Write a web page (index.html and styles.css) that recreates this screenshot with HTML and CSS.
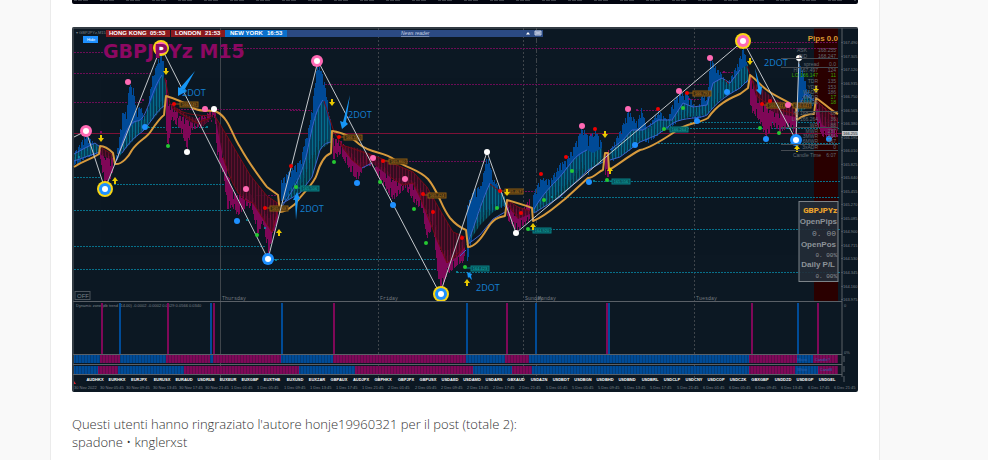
FILE: index.html
```html
<!DOCTYPE html>
<html lang="it">
<head>
    <meta charset="UTF-8">
    <meta name="viewport" content="width=device-width, initial-scale=1.0">
    <title>GBPJPY M15</title>
    <link rel="stylesheet" href="styles.css">
</head>
<body>
    <main class="post">
        <svg class="shot shot-previous" viewBox="72 0 786 4" aria-hidden="true">
            <path d="M74 0.500H856" stroke="#3c4048" stroke-dasharray="3 1 4 1 5 12"/>
        </svg>

        <svg class="shot" viewBox="72 27 786 365" role="img" aria-label="GBPJPYz M15">
            <defs>
                <pattern id="hatchBlue" width="3" height="4" patternUnits="userSpaceOnUse">
                    <rect width="3" height="4" fill="#083e50"/>
                    <rect width="1" height="4" fill="#08788a"/>
                </pattern>
                <pattern id="hatchRed" width="3" height="4" patternUnits="userSpaceOnUse">
                    <rect width="3" height="4" fill="#3c0b20"/>
                    <rect width="1" height="4" fill="#6d1030"/>
                </pattern>
                <pattern id="grid" width="3" height="10" patternUnits="userSpaceOnUse">
                    <rect width="1" height="10" fill="#0c1823" opacity="0.25"/>
                </pattern>
                <g id="up"><path d="M0 -4L3 0H1V3H-1V0H-3Z"/></g>
                <g id="down"><path d="M0 4L3 0H1V-3H-1V0H-3Z"/></g>
            </defs>

            <rect x="814" y="28" width="24" height="273" fill="#2a0000"/>

            <!-- day separators -->
            <path class="day" d="M220.5 28V378"/>
            <path class="day dotted" d="M378.5 28V378M523.5 28V378M694.5 28V378"/>
            <path class="day dashed" d="M536.5 28V378"/>

            <!-- support and resistance levels -->
            <path class="level-sell" d="M74 52.5H104M74 73.5H152M74 102.5H143M175 109.5H300M220 48.5H838M325 84.5H708M290 110.5H312M400 161.5H487M256 195.5H276M510 191.5H537M745 42.5H838M637 110.5H658M688 99.5H706M722 72.5H740"/>
            <path class="level-buy" d="M74 177.5H100M114 184.5H226M74 210.5H231M74 246.5H266M274 259.5H436M74 269.5H436M148 127.5H206M595 181.5H840M552 197.5H840M550 229.5H840M457 272.5H840M690 122.5H840M684 128.5H840M655 143.5H840"/>
            <path class="bid" d="M74 133.5H842"/>

            <g id="candles"></g>

            <!-- moving average ribbons -->
            <g fill="url(#hatchBlue)" opacity="0.8">
                <path d="M74 154L85 148L95 143L100 147V152L88 156L74 161Z"/>
                <path d="M117 160L130 128L137 120L143 120L153 97L162 75L166 82L165 105L155 117L140 133L122 153Z"/>
                <path d="M281 208L290 190L298 178L307 153L315 117L323 100L331 130V142L320 150L312 177L300 193L283 203Z"/>
                <path d="M467 245L473 227L482 200L490 183L498 189L505 197V205L493 212L480 225Z"/>
                <path d="M534 209L547 190L560 177L573 160L587 150L593 153L602 148L603 162L588 170L560 197L534 213Z"/>
                <path d="M610 152L623 140L632 130L643 130L650 127L658 120L672 120L683 103L693 107L707 105L713 83L722 78L730 83L740 70L748 64V80L740 88L720 100L707 115L690 117L673 123L657 135L640 142L620 157L610 160Z"/>
                <path d="M798 107L805 95L812 100L814 104L800 112Z"/>
            </g>
            <g fill="url(#hatchRed)" opacity="0.85">
                <path d="M101 148L112 154V160L101 155Z"/>
                <path d="M170 103L180 110L187 115L200 120L213 117L203 126L190 122L172 108Z"/>
                <path d="M215 116L233 146L250 175L267 196L279 204L272 232L262 217L253 203L237 193L223 157Z"/>
                <path d="M340 145L357 148L380 158L413 172L427 187L440 210L453 232L465 237V247L457 257L447 263L437 240L427 213L420 197L413 183L403 185L390 177L372 163L362 168L352 160Z"/>
                <path d="M507 200L518 207L530 211V214L518 219L507 205Z"/>
                <path d="M751 78L757 85L773 98L796 108V117L775 113L757 100Z"/>
                <path d="M816 100L838 118V131L822 125Z"/>
            </g>
            <g class="ribbon-blue">
                <path d="M74 154L85 148L95 143L100 147M74 161L88 156L100 152"/>
                <path d="M117 160C122 145 126 122 137 121C147 121 150 92 162 75M122 153C132 138 137 136 143 131C153 120 155 112 165 105"/>
                <path d="M281 208C293 190 300 180 307 153C313 122 316 110 323 100M283 203L300 193L312 177L320 150C324 143 327 143 331 142M362 168L372 163"/>
                <path d="M467 245C476 222 480 205 490 183M467 245L480 235L493 219L505 212M460 256L466 250"/>
                <path d="M534 209C545 190 556 182 563 173C575 158 576 155 587 150M534 213L560 197L588 170L603 162"/>
                <path d="M610 160L620 157L640 142L657 135L673 123C684 117 700 119 707 115C716 103 724 97 740 88L748 80M610 150L623 140L632 130L643 130L658 120L672 120L683 103L693 107L707 105L713 83L722 78L730 83L740 70"/>
                <path d="M798 108L805 94L814 101"/>
            </g>
            <g class="ribbon-red">
                <path d="M100 147L113 155M165 78L170 104C182 114 190 115 213 116M172 108L197 123L210 118"/>
                <path d="M215 116L233 146L250 175L267 196L279 204M223 157C235 193 241 200 253 203L262 217L272 232L278 210"/>
                <path d="M324 101L334 132L342 145L380 158L413 172L427 187L440 210L453 232L465 237M340 143L352 160L362 168M390 177L403 185L413 183L420 197L437 240L447 263L465 247"/>
                <path d="M490 184L499 191M507 200L518 207L530 211M507 203L518 218M747 66L758 97L773 108L796 114M816 100L838 122M725 80L729 84"/>
            </g>

            <path class="average" d="M74 167C84 160 90 160 99 154L100 146C106 146 111 151 113 153L115 164C122 165 129 156 132 150C139 140 147 138 151 131C157 122 160 118 164 115L166 96C173 98 182 101 193 108C203 113 212 109 217 112C229 118 232 135 240 147C250 165 258 175 267 187L278 195L280 212C286 212 290 208 295 204C307 188 314 184 317 174C321 160 326 155 331 153L332 131C345 133 351 137 359 144C371 154 383 151 395 160C408 169 418 169 428 179C439 192 441 207 450 218C456 225 461 228 466 230L468 247C474 247 481 239 487 229C493 219 498 217 505 216L507 200C514 202 524 205 532 208L533 221C546 216 556 206 565 199L588 178C594 178 599 171 603 170L605 153L608 153L609 170C619 164 630 155 640 150C650 148 661 141 673 133C684 123 698 124 708 118C718 103 731 98 740 94L748 88L750 75C756 79 762 87 767 90C776 97 784 99 796 107L797 120C803 115 808 114 814 114L816 98C824 103 830 110 838 114"/>

            <g id="tags"></g>

            <path class="zigzag" d="M74 137L86 131L105 189L161 47L268 259L318 61L440 294L487 152L516 233L743 41L796 140L799 58"/>

            <g id="dots"></g>

            <g fill="#e8c800">
                <use href="#down" x="101" y="138"/>
                <use href="#down" x="166" y="71"/>
                <use href="#down" x="332" y="102"/>
                <use href="#down" x="507" y="192"/>
                <use href="#down" x="605" y="134"/>
                <use href="#down" x="750" y="61"/>
                <use href="#down" x="816" y="89"/>
                <use href="#up" x="115" y="181"/>
                <use href="#up" x="279" y="233"/>
                <use href="#up" x="467" y="283"/>
                <use href="#up" x="533" y="227"/>
                <use href="#up" x="610" y="171"/>
                <use href="#up" x="797" y="149"/>
            </g>

            <text class="symbol" x="103" y="58">GBPJPYz M15</text>

            <g fill="#1696f5">
                <path d="M195 71L185 89L187 91L178 96V87L180 88Z"/>
                <path d="M350 95L346 122L348 124L342 129L340 121L343 122Z"/>
                <path d="M755 68L760 86L762 87L761 95L756 90L758 89Z"/>
                <path d="M297 192L300 199L298 200L296 220L295 200L293 200Z"/>
                <path d="M467 272L472 274L471 276L472 280L469 277L468 278Z"/>
            </g>
            <g class="note">
                <text x="182" y="96">2DOT</text>
                <text x="348" y="118">2DOT</text>
                <text x="300" y="212">2DOT</text>
                <text x="476" y="291">2DOT</text>
                <text x="764" y="66">2DOT</text>
            </g>

            <!-- top toolbar -->
            <text class="tiny" x="76" y="34">▾ GBPJPYz,M15</text>
            <rect x="83" y="36" width="15" height="7" fill="#1e90ff"/>
            <text class="button-text" x="91" y="41">Hide</text>
            <rect x="106" y="30" width="64" height="7" fill="#8b1a1f"/>
            <rect x="171" y="30" width="54" height="7" fill="#8b1a1f"/>
            <rect x="225" y="30" width="62" height="7" fill="#0a70cc"/>
            <rect x="287" y="30" width="256" height="7" fill="#2b4a83"/>
            <g class="session">
                <text x="109" y="35">HONG KONG</text>
                <text x="150" y="35">05:53</text>
                <text x="175" y="35">LONDON</text>
                <text x="205" y="35">21:53</text>
                <text x="230" y="35">NEW YORK</text>
                <text x="267" y="35">16:53</text>
            </g>
            <text class="news" x="401" y="35">News reader</text>
            <path d="M526 34.500L528 32L530 34.500Z" fill="#fff"/>
            <path d="M535 31H541V35H535ZM536 32L540 34M540 32L536 34" fill="#7088b5" stroke="#c5cee2"/>

            <!-- daily range table -->
            <g id="stats" class="stats"></g>
            <path d="M781 58.500H838M781 67.500H838M800 111.500H838M781 127.500H838M781 144.500H838M781 150.500H838" stroke="#454b52"/>
            <text class="pips" x="838" y="41">Pips 0.0</text>

            <!-- open position box -->
            <rect x="799" y="201.500" width="39" height="80" fill="#222c37" fill-opacity="0.9" stroke="#7c8389"/>
            <g class="account">
                <text class="account-name" x="837" y="213">GBPJPYz</text>
                <text class="account-label" x="837" y="224">OpenPips</text>
                <text class="account-main" x="836" y="236">0. 00</text>
                <text class="account-label" x="836" y="247">OpenPos</text>
                <text class="account-value" x="837" y="257">0. 00%</text>
                <text class="account-label" x="835" y="267">Daily P/L</text>
                <text class="account-value" x="837" y="278">0. 00%</text>
            </g>

            <g class="days">
                <text x="222" y="300">Thursday</text>
                <text x="380" y="300">Friday</text>
                <text x="525" y="300">Sunday</text>
                <text x="538" y="300">Monday</text>
                <text x="696" y="300">Tuesday</text>
            </g>
            <rect x="75" y="291.500" width="15" height="8" fill="#0c1823" stroke="#4b535b"/>
            <text class="off" x="77" y="298">OFF</text>

            <!-- trend panes -->
            <text class="tiny" x="76" y="307">Dynamic zone jdb trend (14.00) -0.0002 -0.0002 0.0029 0.0566 0.0340</text>
            <g id="signals"></g>
            <g id="trends"></g>
            <rect x="74" y="355" width="764" height="19" fill="url(#grid)"/>
            <g class="tiny ribbon-text">
                <text x="797" y="361">Micro</text>
                <text x="815" y="361">Candle?</text>
                <text x="797" y="371">White</text>
                <text x="820" y="371">CandB</text>
            </g>
            <path class="frame" d="M73 28V391M72 28H858M842 28V377M73 301.500H842M73 354.500H842M73 364.500H842M73 374.500H842"/>

            <g id="pairs" class="pairs"></g>
            <g id="times" class="tiny"></g>
            <g id="prices" class="tiny"></g>
            <rect x="842" y="131" width="16" height="5" fill="#c0c5c9"/>
            <text class="price-now" x="843" y="135">166.255</text>
            <g class="tiny">
                <text x="844" y="307">0</text>
                <text x="844" y="354">0%</text>
            </g>
            <path d="M844 356V362M844 366V372M844 376V382" stroke="#59616a"/>
            <path d="M74 381L76 384H74Z" fill="#e0202e"/>
        </svg>

        <p class="thanks">Questi utenti hanno ringraziato l'autore honje19960321 per il post (totale 2):<br>spadone • knglerxst</p>
    </main>

    <script src="chart.js"></script>
</body>
</html>
```

FILE: styles.css
```css
:root {
    --page-bg: #f9f9f9;
    --post-bg: #ffffff;
    --border-color: #ebebeb;
    --text-color: #333333;
    --chart-bg: #0c1823;
    --blue: #004b97;
    --magenta: #7f0858;
    --muted: #7b8289;
}

* {
    box-sizing: border-box;
}

body {
    margin: 0;
    background-color: var(--page-bg);
    color: var(--text-color);
    font-family: "Open Sans", sans-serif;
    font-size: 13px;
    font-weight: 300;
    line-height: 18px;
}

.post {
    min-height: 100vh;
    margin: 0 108px 0 50px;
    padding: 0 21px;
    background-color: var(--post-bg);
    border-left: 1px solid var(--border-color);
    border-right: 1px solid var(--border-color);
}

.shot {
    display: block;
    width: 100%;
    height: auto;
    margin-bottom: 23px;
    border-radius: 2px;
    background-color: var(--chart-bg);
    font-family: "Liberation Sans", sans-serif;
    font-weight: 400;
}

.shot-previous {
    background-color: #02040f;
    border-radius: 0 0 2px 2px;
}

.thanks {
    margin: 0;
    padding-bottom: 8px;
}

/* chart lines */
.shot path {
    stroke-linejoin: round;
}

.day {
    stroke: #3f454b;
    fill: none;
}

.dotted {
    stroke-dasharray: 2 2;
}

.dashed {
    stroke-dasharray: 5 2 1 2;
}

.level-sell {
    stroke: #6c0d56;
    stroke-dasharray: 2 1;
}

.level-buy {
    stroke: #08708a;
    stroke-dasharray: 2 1;
}

.bid {
    fill: none;
    stroke: #7d1238;
}

.ribbon-blue {
    fill: none;
    stroke: #3b62cc;
}

.ribbon-red {
    fill: none;
    stroke: #780a14;
}

.average {
    fill: none;
    stroke: #d79a3d;
    stroke-width: 2px;
}

.zigzag {
    fill: none;
    stroke: #c4c8cc;
}

.frame {
    fill: none;
    stroke: #5a6067;
}

.blue {
    fill: var(--blue);
}

.magenta {
    fill: var(--magenta);
}

/* chart text */
.symbol {
    font: bold 19px "DejaVu Sans", sans-serif;
    fill: #8c0862;
}

.note {
    font: 9px "Open Sans", sans-serif;
    fill: #1580d2;
}

.tiny {
    font-size: 4px;
    fill: var(--muted);
}

.session {
    font-size: 6px;
    font-weight: bold;
    fill: #ffffff;
}

.news {
    font-size: 5px;
    font-style: italic;
    text-decoration: underline;
    fill: #c5cee2;
}

.button-text {
    font-size: 4px;
    text-anchor: middle;
    fill: #ffffff;
}

.pips {
    font-size: 8px;
    font-weight: bold;
    text-anchor: end;
    fill: #dc9a32;
}

.stats {
    font-size: 5px;
    text-anchor: end;
    fill: #626a72;
}

.stats .good {
    fill: #39a800;
}

.account {
    text-anchor: end;
    fill: #8c9298;
}

.account-name {
    font: 900 8px Roboto, sans-serif;
    fill: #e9a22c;
}

.account-label {
    font-size: 8px;
    font-weight: bold;
}

.account-main {
    font: 8px "Liberation Mono", monospace;
}

.account-value {
    font: 6px "Liberation Mono", monospace;
}

.days {
    font: 5px "Liberation Mono", monospace;
    fill: #747a80;
}

.off {
    font-size: 6px;
    fill: #7a8188;
}

.pairs {
    font-size: 4px;
    font-weight: bold;
    text-anchor: middle;
    fill: #ffffff;
}

.ribbon-text {
    fill: #2d62b0;
}

.tag {
    font-size: 4px;
    text-anchor: middle;
}

.tag-sell rect {
    fill: #3a2a12;
    stroke: #8d5c10;
}

.tag-sell text {
    fill: #c08420;
}

.tag-buy rect {
    fill: #075058;
    stroke: #078084;
}

.tag-buy text {
    fill: #10b5ae;
}

.price-now {
    font-size: 4px;
    fill: #20262c;
}
```

FILE: chart.js
```js
const SVG_NS = 'http://www.w3.org/2000/svg';

function add(parent, tag, attrs, text) {
    const el = document.createElementNS(SVG_NS, tag);
    for (const key in attrs) {
        el.setAttribute(key, attrs[key]);
    }
    if (text !== undefined) {
        el.textContent = text;
    }
    parent.appendChild(el);
    return el;
}

function byId(id) {
    return document.getElementById(id);
}

// Price runs: [x, high, low]
const runs = [
    ['blue', [[74, 153, 165], [80, 143, 162], [86, 134, 158], [92, 141, 156], [99, 146, 152]]],
    ['magenta', [[100, 150, 160], [104, 154, 186], [108, 156, 183], [113, 158, 172]]],
    ['blue', [[114, 158, 165], [118, 145, 158], [122, 113, 152], [126, 112, 146], [129, 84, 142], [133, 88, 138], [136, 111, 137], [140, 105, 132], [145, 119, 128], [148, 102, 124], [152, 76, 120], [157, 62, 110], [161, 50, 106], [164, 66, 104]]],
    ['magenta', [[166, 80, 140], [168, 104, 146], [172, 104, 120], [180, 116, 130], [187, 118, 150], [191, 120, 130], [200, 117, 128], [208, 112, 122], [214, 110, 118], [217, 120, 155], [223, 155, 175], [227, 170, 209], [232, 190, 207], [237, 195, 216], [247, 193, 206], [252, 195, 210], [257, 208, 234], [263, 210, 225], [268, 215, 254], [273, 214, 235], [279, 205, 215]]],
    ['blue', [[281, 180, 204], [290, 170, 198], [300, 160, 185], [304, 143, 178], [310, 120, 160], [315, 80, 155], [317, 62, 150], [323, 76, 145], [327, 100, 143], [331, 125, 140]]],
    ['magenta', [[333, 138, 160], [340, 140, 154], [350, 152, 172], [357, 160, 180], [365, 154, 166], [373, 158, 167], [380, 162, 182], [393, 178, 200], [405, 178, 188], [415, 182, 205], [422, 190, 208], [426, 210, 240], [433, 208, 225], [437, 230, 275], [441, 250, 289], [447, 250, 275], [457, 245, 265], [465, 238, 262]]],
    ['blue', [[467, 205, 262], [473, 190, 230], [480, 186, 220], [487, 155, 212], [493, 178, 210], [500, 190, 208], [505, 197, 206]]],
    ['magenta', [[507, 203, 220], [517, 210, 231], [523, 208, 225], [530, 198, 222]]],
    ['blue', [[533, 193, 213], [541, 177, 205], [550, 180, 198], [560, 163, 192], [566, 160, 185], [575, 143, 175], [582, 127, 168], [588, 137, 175], [595, 130, 163], [602, 144, 160]]],
    ['magenta', [[605, 155, 175], [609, 148, 180]]],
    ['blue', [[611, 148, 162], [620, 130, 156], [628, 111, 152], [637, 122, 142], [641, 108, 140], [647, 128, 143], [658, 110, 135], [667, 120, 128], [673, 101, 125], [679, 93, 120], [687, 94, 116], [697, 110, 120], [702, 94, 117], [707, 97, 114], [710, 58, 110], [715, 66, 103], [722, 75, 98], [727, 84, 94], [737, 64, 90], [743, 47, 84], [748, 68, 82]]],
    ['magenta', [[750, 74, 110], [757, 98, 118], [766, 106, 138], [773, 108, 125], [780, 110, 133], [788, 106, 126], [796, 112, 135]]],
    ['blue', [[798, 62, 112], [802, 70, 100], [807, 88, 106], [814, 100, 105]]],
    ['magenta', [[816, 102, 123], [822, 115, 137], [830, 121, 138], [838, 130, 137]]]
];

const candles = byId('candles');
runs.forEach(([color, points]) => {
    for (let i = 0; i < points.length - 1; i++) {
        const [x1, high1, low1] = points[i];
        const [x2, high2, low2] = points[i + 1];
        for (let x = x1; x < x2; x++) {
            const t = (x - x1) / (x2 - x1);
            const wave = Math.sin(x * 2.3) * 6 + Math.sin(x * 5.1) * 3;
            const high = high1 + (high2 - high1) * t + Math.max(0, wave);
            const low = low1 + (low2 - low1) * t + Math.min(0, wave);
            add(candles, 'rect', { class: color, x: x, y: Math.round(high), width: 1, height: Math.max(2, Math.round(low - high)) });
        }
    }
});

// Turning points: colour, radius, then x/y pairs
const dots = [
    ['#ff69b4', 3, [[128, 82], [205, 109], [246, 189], [373, 158], [405, 179], [582, 126], [628, 109], [679, 91], [710, 58], [788, 105]]],
    ['#1e90ff', 3, [[145, 127], [237, 221], [357, 183], [393, 205], [589, 182], [635, 145], [697, 121], [727, 92], [766, 139], [829, 139]]],
    ['#fff', 3, [[214, 109], [187, 152], [487, 152], [516, 233], [799, 58]]],
    ['#f00000', 2, [[174, 104], [265, 208], [291, 166], [339, 137], [383, 161], [423, 194], [433, 212], [462, 238], [500, 191], [521, 213], [541, 174], [566, 157], [595, 129], [658, 109], [687, 93], [762, 104], [770, 101]]],
    ['#25c832', 2, [[168, 146], [257, 235], [296, 187], [334, 162], [380, 182], [414, 209], [426, 243], [465, 267], [497, 208], [528, 229], [544, 200], [572, 171], [607, 180], [664, 129], [683, 108], [760, 128], [779, 133]]],
    ['#a0087a', 1, [[101, 132], [143, 100], [591, 135], [637, 110], [689, 99], [724, 72]]],
    ['#0899ad', 1, [[79, 157], [148, 127], [207, 127], [247, 220], [265, 228], [276, 260], [457, 272], [552, 197], [594, 181], [788, 128]]]
];
dots.forEach(([fill, r, places]) => {
    places.forEach(([cx, cy]) => add(byId('dots'), 'circle', { cx, cy, r, fill }));
});

// Major swings: x, y, ring colour, has a yellow border
const swings = [
    [86, 131, '#ff69b4', false], [161, 48, '#ff69b4', true], [317, 61, '#ff69b4', false], [743, 41, '#ff69b4', true],
    [105, 189, '#1e90ff', true], [268, 259, '#1e90ff', false], [441, 294, '#1e90ff', true], [796, 140, '#1e90ff', false]
];
swings.forEach(([cx, cy, fill, bordered]) => {
    if (bordered) {
        add(byId('dots'), 'circle', { cx, cy, r: 8, fill: '#f8d514' });
    }
    add(byId('dots'), 'circle', { cx, cy, r: 6, fill });
    add(byId('dots'), 'circle', { cx, cy, r: 3, fill: '#fff' });
});

const tags = [
    ['sell', 180, 102, '166.449'], ['sell', 270, 206, '165.068'], ['sell', 344, 135, '166.180'],
    ['sell', 389, 159, '165.860'], ['sell', 428, 193, '165.424'], ['sell', 505, 189, '165.467'],
    ['sell', 693, 91, '166.793'], ['sell', 767, 103, '166.641'], ['sell', 793, 103, '166.641'],
    ['buy', 301, 186, '165.506'], ['buy', 471, 266, '164.423'], ['buy', 533, 228, '164.920'],
    ['buy', 670, 127, '166.264'], ['buy', 612, 179, '165.556']
];
tags.forEach(([kind, x, y, price]) => {
    const tag = add(byId('tags'), 'g', { class: 'tag tag-' + kind });
    add(tag, 'path', { d: `M${x - 5} ${y + 2}H${x}`, stroke: kind === 'sell' ? '#8d5c10' : '#078084' });
    add(tag, 'rect', { x, y, width: 18, height: 5 });
    add(tag, 'text', { x: x + 9, y: y + 4 }, price);
});

// Trend signals
const signals = [
    [101, 'magenta'], [119, 'blue'], [167, 'magenta'], [210, 'blue'], [213, 'magenta'], [281, 'blue'], [333, 'magenta'],
    [466, 'blue'], [506, 'magenta'], [535, 'blue'], [606, 'magenta'], [608, 'blue'], [751, 'magenta'], [797, 'blue'], [817, 'magenta']
];
signals.forEach(([x, color]) => add(byId('signals'), 'rect', { class: color, x, y: 303, width: 2, height: 51 }));

// Start of every block, colours alternate from blue
const trends = [
    [355, [74, 100, 120, 166, 210, 213, 281, 333, 466, 505, 529, 749, 797, 813, 838]],
    [366, [74, 98, 118, 184, 299, 355, 473, 512, 532, 749, 795, 818, 838]]
];
trends.forEach(([y, edges]) => {
    for (let i = 0; i < edges.length - 1; i++) {
        add(byId('trends'), 'rect', { class: i % 2 ? 'magenta' : 'blue', x: edges[i], y, width: edges[i + 1] - edges[i], height: 8 });
    }
});

const pairs = 'AUDHKX EURHKX EURJPX EURUSX EURAUD USDRUB EUXEUR EUXGBP EUXTHB EUXUSD EUXZAR GBPAUX AUDJPX GBPHKX GBPJPX GBPUSX USDAED USDAMD USDARS GBXAUD USDAZN USDBDT USDBGN USDBHD USDBND USDBRL USDCLP USDCNY USDCOP USDCZK GBXGBP USDDZD USDEGP USDGEL'.split(' ');
pairs.forEach((pair, i) => add(byId('pairs'), 'text', { x: Math.round(95 + i * 22.18), y: 381 }, pair));

const hours = ['01:45', '05:45', '09:45', '13:45', '17:45', '21:45'];
['30 Nov', '1 Dec', '2 Dec', '5 Dec', '6 Dec'].forEach((day, d) => {
    hours.forEach((hour, h) => {
        const label = d + h === 0 ? '30 Nov 2022' : day + ' ' + hour;
        add(byId('times'), 'text', { x: Math.round(74 + (d * 6 + h) * 26.2), y: 389 }, label);
    });
});

for (let i = 0; i < 20; i++) {
    const y = Math.round(44 + i * 13.53);
    add(byId('prices'), 'text', { x: 843, y }, (167.49 - i * 0.185).toFixed(3));
    add(byId('prices'), 'path', { d: `M841 ${y - 1.5}h2`, stroke: '#50565d' });
}

// Range table: label, label x, value, y, highlighted
const stats = [
    ['ASK', 807, '168.255', 52], ['BID', 807, '168.247', 58], ['spread', 819, '0.0', 66],
    ['HI 167.497', 818, '124', 72], ['LO 166.147', 818, '11', 77, true], ['TDR', 818, '135', 83],
    ['YDR', 818, '153', 89], ['WADR', 818, '186', 94], ['MADR', 818, '17', 99, true], ['RANGE', 818, '18', 104, true],
    ['HI 168.247', 818, '68', 115], ['LO 166.264', 818, '36', 121], ['WR', 818, '88', 127],
    ['MWR', 818, '287', 133], ['3MWR', 818, '354', 138], ['6MWR', 818, '467', 143], ['3xADR', 818, '0', 149],
    ['Candle Time', 821, '6:07', 157]
];
stats.forEach(([label, x, value, y, good]) => {
    add(byId('stats'), 'text', { x, y, class: good && label === 'LO 166.147' ? 'good' : '' }, label);
    add(byId('stats'), 'text', { x: 836, y, class: good ? 'good' : '' }, value);
});
```
